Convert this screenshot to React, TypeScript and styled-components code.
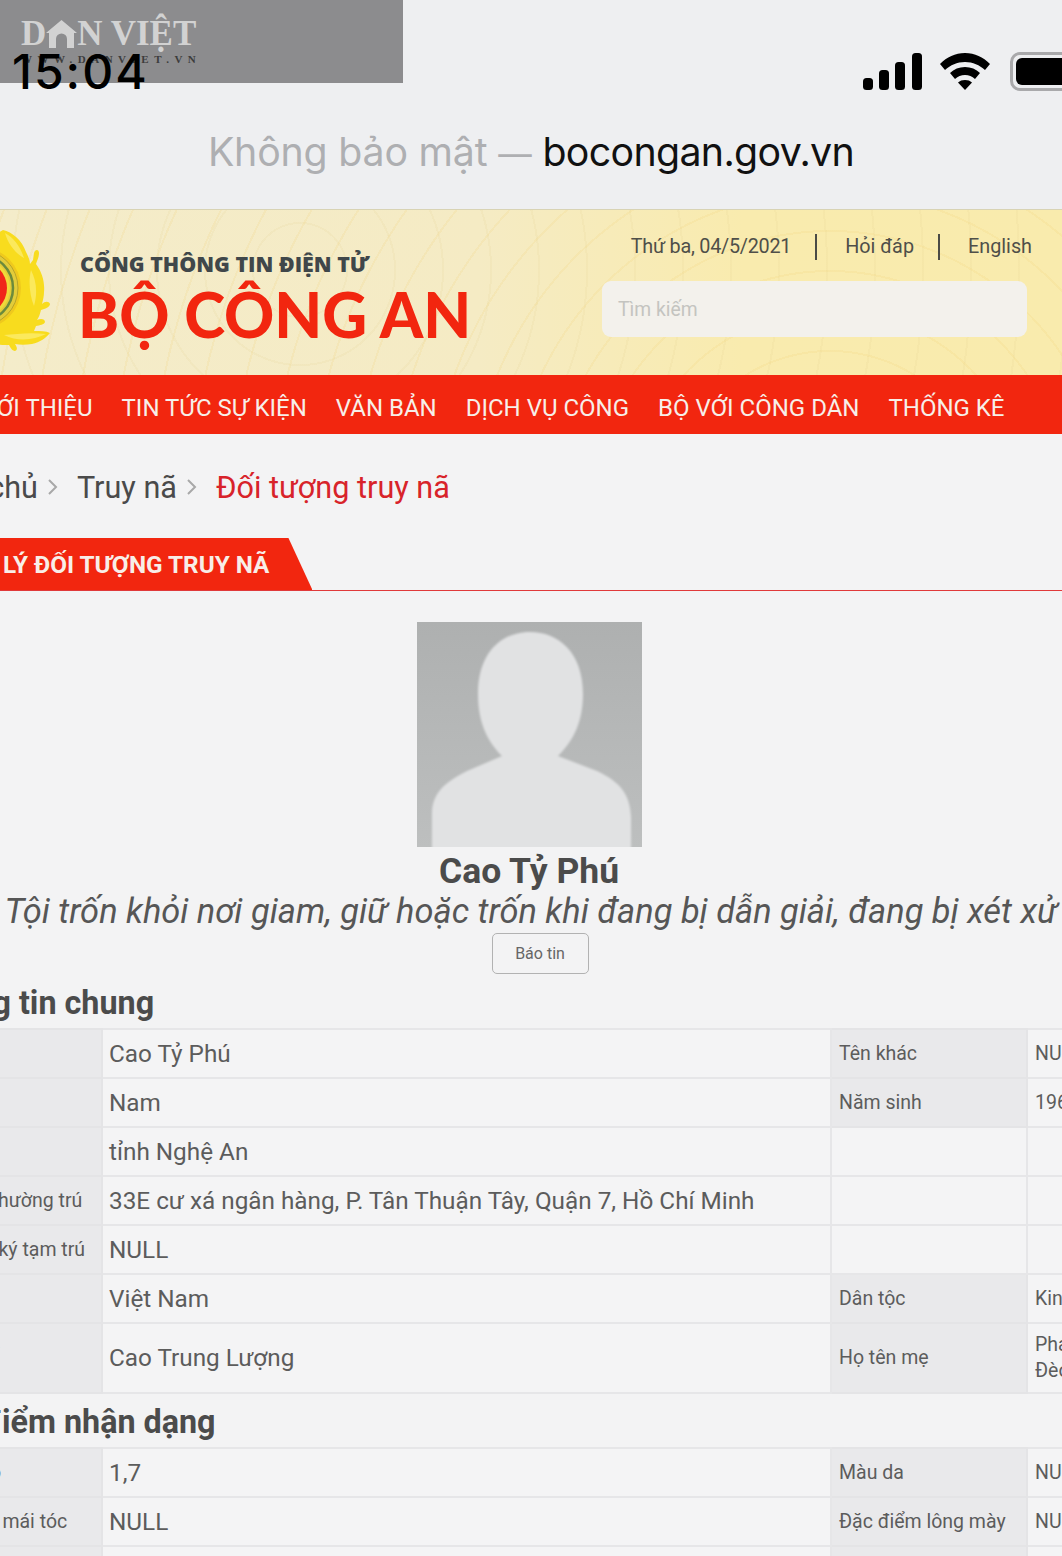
import styled, { createGlobalStyle } from 'styled-components';

const GlobalStyle = createGlobalStyle`
  html, body {
    margin: 0;
    padding: 0;
    background: #f3f3f4;
  }
  body {
    font-family: Roboto, "Noto Sans", sans-serif;
    overflow: hidden;
  }
`;

const Page = styled.div`
  position: relative;
  width: 1062px;
  height: 1556px;
  overflow: hidden;
  background: #f3f3f4;
`;

const Browser = styled.div`
  height: 210px;
  box-sizing: border-box;
  padding-top: 46px;
  background: #eeeff1;
  border-bottom: 1px solid #d8d3b4;
`;

const Watermark = styled.div`
  position: absolute;
  left: 0;
  top: 0;
  width: 403px;
  height: 83px;
  box-sizing: border-box;
  padding: 19px 0 0 21px;
  background: #8c8c8e;
  color: #d2d2d2;
  font-family: "Liberation Serif", serif;
  font-weight: 700;
`;

const WatermarkName = styled.div`
  display: flex;
  align-items: flex-end;
  height: 30px;
  font-size: 35px;
  line-height: 30px;
`;

const WatermarkUrl = styled.div`
  margin-top: 3px;
  color: #3c3c3c;
  font-size: 11px;
  line-height: 14px;
  letter-spacing: 5.500px;
  white-space: nowrap;
`;

const StatusBar = styled.div`
  position: relative;
  display: flex;
  align-items: center;
  justify-content: space-between;
  height: 52px;
  padding-left: 12px;
`;

const Time = styled.span`
  color: #000;
  font-family: Inter, "Liberation Sans", sans-serif;
  font-size: 48px;
  font-weight: 500;
  line-height: 52px;
  letter-spacing: 2px;
`;

const StatusIcons = styled.div`
  display: flex;
  align-items: center;
  gap: 20px;
  margin: -2px -28px 0 0;
`;

const SignalIcon = styled.svg`
  margin-right: -2px;
`;

const Battery = styled.div`
  width: 80px;
  height: 39px;
  box-sizing: border-box;
  padding: 3px;
  border: 3px solid #a9a9ab;
  border-radius: 10px;
  &::after {
    content: '';
    display: block;
    height: 100%;
    border-radius: 6px;
    background: #000;
  }
`;

const Address = styled.div`
  margin-top: 29px;
  color: #aeafb2;
  font-family: Inter, "Noto Sans", sans-serif;
  font-size: 39.300px;
  line-height: 50px;
  text-align: center;
  letter-spacing: -0.2px;
`;

const Dash = styled.span`
  font-size: 33.500px;
`;

const Domain = styled.span`
  color: #111;
  letter-spacing: -0.65px;
`;

const Header = styled.header`
  display: flex;
  justify-content: space-between;
  height: 165px;
  background:
    repeating-radial-gradient(circle at 830px 300px, transparent 0 38px, rgba(240, 205, 110, 0.16) 38px 40px),
    repeating-radial-gradient(circle at 300px 60px, transparent 0 46px, rgba(225, 205, 140, 0.14) 46px 48px),
    linear-gradient(90deg, #f4ecca 0%, #f5ebc4 45%, #f9ebae 70%, #f9ebad 100%);
`;

const Brand = styled.div`
  display: flex;
  align-items: center;
  gap: 28px;
`;

const Emblem = styled.svg`
  width: 100px;
  height: 126px;
  margin-left: -48px;
  margin-top: -3px;
`;

const BrandText = styled.div`
  display: flex;
  flex-direction: column;
  margin-top: 10px;
`;

const PortalName = styled.div`
  color: #40474a;
  font-family: "Open Sans", sans-serif;
  font-size: 21.400px;
  font-weight: 800;
  line-height: 30px;
  white-space: nowrap;
`;

const MinistryName = styled.div`
  margin: 3px 0 0 -2px;
  color: #f2260f;
  font-family: Lato, sans-serif;
  font-size: 62px;
  font-weight: 900;
  line-height: 64px;
  white-space: nowrap;
`;

const HeaderTools = styled.div`
  display: flex;
  flex-direction: column;
  align-items: flex-end;
  padding: 23px 30px 0 0;
`;

const TopLinks = styled.div`
  display: flex;
  align-items: center;
  height: 28px;
  color: #4f4f49;
  font-size: 19.800px;
`;

const TopLink = styled.span<{ $divided?: boolean }>`
  padding: 0 24px 0 28px;
  border-right: ${(p) => (p.$divided ? '2px solid #4b4b46' : 'none')};
  line-height: 26px;
  white-space: nowrap;
  &:last-child {
    padding-right: 0;
  }
`;

const DateText = styled(TopLink)`
  letter-spacing: -0.25px;
`;

const SearchBox = styled.div`
  width: 425px;
  height: 56px;
  box-sizing: border-box;
  margin: 20px 5px 0 0;
  padding: 0 16px;
  border-radius: 9px;
  background: #f3f1ec;
  color: #c4c4c0;
  font-size: 19.300px;
  line-height: 58px;
`;

const Nav = styled.nav`
  display: flex;
  align-items: center;
  gap: 29px;
  height: 59px;
  box-sizing: border-box;
  padding-top: 7px;
  margin-left: -26px;
  background: #f2260f;
`;

const NavItem = styled.span`
  color: #f7efe9;
  font-size: 24px;
  line-height: 52px;
  white-space: nowrap;
`;

const Breadcrumb = styled.div`
  display: flex;
  align-items: center;
  gap: 10px;
  height: 104px;
  box-sizing: border-box;
  padding-top: 2px;
  margin-left: -97px;
  color: #4a4a4a;
  font-size: 30.600px;
`;

const Crumb = styled.span<{ $active?: boolean }>`
  color: ${(p) => (p.$active ? '#d8232a' : '#4a4a4a')};
  white-space: nowrap;
`;

const CrumbArrow = styled.svg`
  width: 10px;
  height: 20px;
  margin-right: 9px;
`;

const TitleBar = styled.div`
  display: flex;
  height: 53px;
  box-sizing: border-box;
  border-bottom: 1px solid #e0393a;
`;

const TitleLabel = styled.h2`
  margin: 0 0 0 -69px;
  padding: 1px 43px 0 0;
  background: #f2260f;
  clip-path: polygon(0 0, calc(100% - 24px) 0, 100% 100%, 0 100%);
  color: #f8eee8;
  font-size: 24.300px;
  font-weight: 700;
  line-height: 51px;
  white-space: nowrap;
`;

const Profile = styled.section`
  display: flex;
  flex-direction: column;
  align-items: center;
  padding-top: 31px;
`;

const Photo = styled.svg`
  display: block;
  width: 225px;
  height: 225px;
  margin-left: -3px;
`;

const PersonName = styled.div`
  margin: 4px 0 0 -4px;
  color: #4b4b4b;
  font-size: 35.500px;
  font-weight: 700;
  line-height: 40px;
`;

const Crime = styled.div`
  color: #565656;
  font-size: 34.400px;
  font-style: italic;
  line-height: 40px;
  white-space: nowrap;
`;

const ReportButton = styled.button`
  width: 97px;
  height: 41px;
  margin: 2px 0 1px 18px;
  padding: 0;
  border: 1px solid #b2b2b2;
  border-radius: 5px;
  background: #f3f3f4;
  color: #666;
  font-family: inherit;
  font-size: 16px;
`;

const Details = styled.section`
  margin-left: -96px;
  width: 1300px;
`;

const SectionTitle = styled.h3`
  margin: 0;
  padding: 4px 0 0 14px;
  color: #4b4b4b;
  font-size: 32.300px;
  font-weight: 700;
  line-height: 49px;
  white-space: nowrap;
`;

const InfoTable = styled.table`
  width: 1300px;
  border-collapse: collapse;
  table-layout: fixed;
`;

const Row = styled.tr<{ $tall?: boolean }>`
  height: ${(p) => (p.$tall ? 70 : 49)}px;
`;

const LabelCell = styled.td`
  box-sizing: border-box;
  padding: 0 7px;
  border: 2px solid #e4e4e6;
  background: #e9e9eb;
  color: #5c5c5c;
  font-size: 19.500px;
  line-height: 26px;
  white-space: nowrap;
  &:first-child {
    padding-left: 9px;
  }
`;

const ValueCell = styled.td`
  box-sizing: border-box;
  padding: 0 6px;
  border: 2px solid #e6e6e8;
  background: #f4f4f5;
  color: #5c5c5c;
  font-size: 24.300px;
  line-height: 30px;
  white-space: nowrap;
`;

const SideValueCell = styled(ValueCell)`
  padding: 0 7px;
  font-size: 19.500px;
  line-height: 26px;
`;

const EmptyCell = styled(ValueCell)``;

type InfoRow = {
  label: string;
  value: string;
  sideLabel?: string;
  sideValue?: string[];
  tall?: boolean;
};

const generalRows: InfoRow[] = [
  { label: 'Họ tên', value: 'Cao Tỷ Phú', sideLabel: 'Tên khác', sideValue: ['NULL'] },
  { label: 'Giới tính', value: 'Nam', sideLabel: 'Năm sinh', sideValue: ['196'] },
  { label: 'Quê quán', value: 'tỉnh Nghệ An' },
  { label: 'Hộ khẩu thường trú', value: '33E cư xá ngân hàng, P. Tân Thuận Tây, Quận 7, Hồ Chí Minh' },
  { label: 'Nơi đăng ký tạm trú', value: 'NULL' },
  { label: 'Quốc tịch', value: 'Việt Nam', sideLabel: 'Dân tộc', sideValue: ['Kinh'] },
  { label: 'Họ tên bố', value: 'Cao Trung Lượng', sideLabel: 'Họ tên mẹ', sideValue: ['Phan', 'Đèo'], tall: true },
];

const traitRows: InfoRow[] = [
  { label: 'Chiều cao', value: '1,7', sideLabel: 'Màu da', sideValue: ['NULL'] },
  { label: 'Đặc điểm mái tóc', value: 'NULL', sideLabel: 'Đặc điểm lông mày', sideValue: ['NULL'] },
  { label: '', value: '', sideLabel: '', sideValue: [] },
];

const navItems = ['GIỚI THIỆU', 'TIN TỨC SỰ KIỆN', 'VĂN BẢN', 'DỊCH VỤ CÔNG', 'BỘ VỚI CÔNG DÂN', 'THỐNG KÊ'];

const Arrow = () => (
  <CrumbArrow viewBox="0 0 10 20">
    <path d="M1 3l7 7-7 7" fill="none" stroke="#a8a8a8" strokeWidth="2" />
  </CrumbArrow>
);

const Table = ({ rows }: { rows: InfoRow[] }) => (
  <InfoTable>
    <colgroup>
      <col width="197" />
      <col width="729" />
      <col width="196" />
      <col width="178" />
    </colgroup>
    <tbody>
      {rows.map((row, i) => (
        <Row key={i} $tall={row.tall}>
          <LabelCell>{row.label}</LabelCell>
          <ValueCell>{row.value}</ValueCell>
          {row.sideLabel !== undefined ? <LabelCell>{row.sideLabel}</LabelCell> : <EmptyCell />}
          {row.sideValue ? (
            <SideValueCell>
              {row.sideValue.map((line, j) => (
                <div key={j}>{line}</div>
              ))}
            </SideValueCell>
          ) : (
            <EmptyCell />
          )}
        </Row>
      ))}
    </tbody>
  </InfoTable>
);

export default function App() {
  return (
    <Page>
      <GlobalStyle />
      <Browser>
        <Watermark>
          <WatermarkName>
            D
            <svg width="31" height="30" viewBox="0 0 31 30">
              <path d="M15.500 1L31 14h-3v15h-7V20a5.500 5.500 0 0 0-11 0v9H3V14H0z" fill="#d2d2d2" />
            </svg>
            N VIỆT
          </WatermarkName>
          <WatermarkUrl>WWW.DANVIET.VN</WatermarkUrl>
        </Watermark>
        <StatusBar>
          <Time>15:04</Time>
          <StatusIcons>
            <SignalIcon width="59" height="37" viewBox="0 0 59 37">
              <rect x="0" y="25" width="10" height="12" rx="3.500" />
              <rect x="16" y="17" width="10" height="20" rx="3.500" />
              <rect x="32" y="9" width="10" height="28" rx="3.500" />
              <rect x="49" y="0" width="10" height="37" rx="3.500" />
            </SignalIcon>
            <svg width="50" height="37" viewBox="0 0 50 37">
              <path d="M25 0C15 0 7 4 0 11l5 6c5.500-5 12-8 20-8s14.500 3 20 8l5-6C43 4 35 0 25 0z" />
              <path d="M25 14c-6 0-11 2.200-15 6l5 6c3-2.500 6-4 10-4s7 1.500 10 4l5-6c-4-3.800-9-6-15-6z" />
              <path d="M25 27c-3 0-5 .8-7 2.500l7 7.500 7-7.500c-2-1.700-4-2.500-7-2.500z" />
            </svg>
            <Battery />
          </StatusIcons>
        </StatusBar>
        <Address>
          Không bảo mật <Dash>—</Dash> <Domain>bocongan.gov.vn</Domain>
        </Address>
      </Browser>
      <Header>
        <Brand>
          <Emblem viewBox="-48 8 100 126">
            <path
              d="M-30 30L3 10C12 12 22 20 26 32C28 36 30 40 30 44L33 40L34 33C35 29 39 29 39 33C39 38 37 40 36 44C42 52 45 62 44 72C44 76 43 80 42 84C45 81 49 81 50 84C50 87 45 89 41 90C40 94 39 97 37 100C41 98 45 99 45 102C44 105 40 105 36 106L34 111C40 111 46 111 50 113C46 118 40 122 32 124C26 125 20 125 15 124C17 127 18 130 15 131C12 131 10 127 9 125C0 125 -20 125 -40 110Z"
              fill="#f8dc1e"
            />
            <path
              d="M5 13C14 18 20 26 24 38C16 34 8 24 5 13ZM31 50C36 60 38 72 34 86C30 76 28 62 31 50ZM4 115C16 114 30 112 46 114C34 120 18 122 4 115Z"
              fill="#fbe95c"
            />
            <circle cx="-20" cy="68" r="41" fill="#efc91d" />
            <circle cx="-20" cy="68" r="38" fill="#e2cc3a" stroke="#b9a52a" strokeWidth="1" />
            <circle cx="-20" cy="68" r="33" fill="none" stroke="#6c8a3c" strokeWidth="2.500" />
            <circle cx="-20" cy="68" r="30" fill="#f0d93a" />
            <circle cx="-20" cy="68" r="27" fill="#f0261a" />
          </Emblem>
          <BrandText>
            <PortalName>CỔNG THÔNG TIN ĐIỆN TỬ</PortalName>
            <MinistryName>BỘ CÔNG AN</MinistryName>
          </BrandText>
        </Brand>
        <HeaderTools>
          <TopLinks>
            <DateText $divided>Thứ ba, 04/5/2021</DateText>
            <TopLink $divided>Hỏi đáp</TopLink>
            <TopLink>English</TopLink>
          </TopLinks>
          <SearchBox>Tìm kiếm</SearchBox>
        </HeaderTools>
      </Header>
      <Nav>
        {navItems.map((item) => (
          <NavItem key={item}>{item}</NavItem>
        ))}
      </Nav>
      <Breadcrumb>
        <Crumb>Trang chủ</Crumb>
        <Arrow />
        <Crumb>Truy nã</Crumb>
        <Arrow />
        <Crumb $active>Đối tượng truy nã</Crumb>
      </Breadcrumb>
      <TitleBar>
        <TitleLabel>QUẢN LÝ ĐỐI TƯỢNG TRUY NÃ</TitleLabel>
      </TitleBar>
      <Profile>
        <Photo viewBox="0 0 225 225">
          <defs>
            <filter id="soft">
              <feGaussianBlur stdDeviation="1.200" />
            </filter>
            <linearGradient id="backdrop" x1="0" y1="0" x2="0" y2="1">
              <stop offset="0" stopColor="#aeb0b0" />
              <stop offset="1" stopColor="#bdbfbf" />
            </linearGradient>
          </defs>
          <rect width="225" height="225" fill="url(#backdrop)" />
          <path
            filter="url(#soft)"
            d="M15 230V190C16 172 26 161 50 149L85 134C73 122 61 104 61 72C61 30 85 10 113 10C141 10 166 30 166 72C166 104 153 122 141 134L180 149C203 160 213 172 214 195V230Z"
            fill="#e1e2e3"
          />
        </Photo>
        <PersonName>Cao Tỷ Phú</PersonName>
        <Crime>Tội trốn khỏi nơi giam, giữ hoặc trốn khi đang bị dẫn giải, đang bị xét xử</Crime>
        <ReportButton type="button">Báo tin</ReportButton>
      </Profile>
      <Details>
        <SectionTitle>Thông tin chung</SectionTitle>
        <Table rows={generalRows} />
        <SectionTitle>Đặc điểm nhận dạng</SectionTitle>
        <Table rows={traitRows} />
      </Details>
    </Page>
  );
}
